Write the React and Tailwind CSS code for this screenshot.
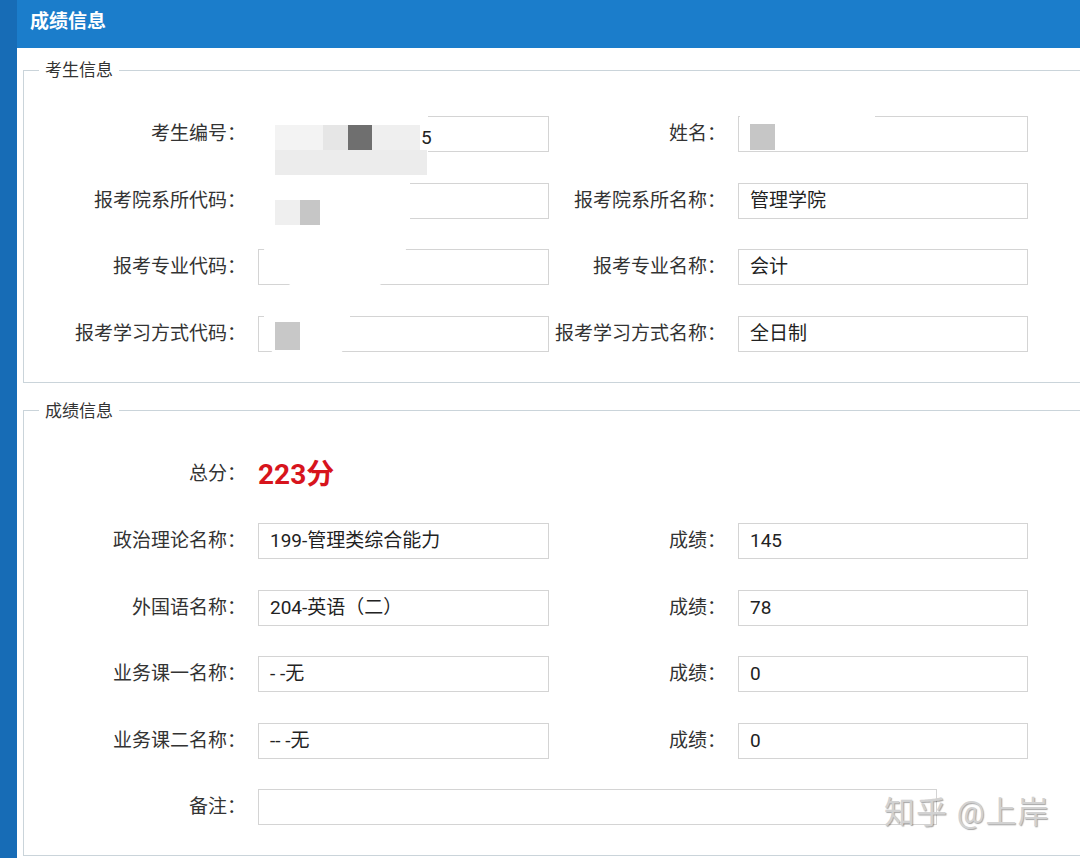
import React from 'react';

const FONT = "font-['Roboto','Noto_Sans_CJK_SC',sans-serif]";

function Field({ label, value, labelW = 'w-[222px]', inputW = 'w-[291px]' }) {
  return (
    <>
      <div className={`${labelW} shrink-0 pr-[-2px] text-right text-[19px] leading-[36px] text-[#333]`}>{label}</div>
      <div
        className={`${inputW} ml-[12px] h-[36px] shrink-0 border border-[#d4d4d4] bg-white pl-[11px] text-[19px] leading-[34px] text-[#222]`}
      >
        {value}
      </div>
    </>
  );
}

function Row({ left, right }) {
  return (
    <div className="flex h-[36px] items-center">
      <Field label={left[0]} value={left[1]} />
      {right && <Field label={right[0]} value={right[1]} labelW="w-[177px]" inputW="w-[290px]" />}
    </div>
  );
}

function Box({ title, className = '', children }) {
  return (
    <fieldset className={`ml-[6px] w-[1070px] border border-[#cad4da] px-0 pt-[34px] pb-[30px] ${className}`}>
      <legend className="ml-[15px] px-[6px] text-[17px] leading-[24px] text-[#333]">{title}</legend>
      <div className="flex flex-col gap-y-[30.5px]">{children}</div>
    </fieldset>
  );
}

export default function App() {
  return (
    <div className={`relative flex h-[858px] w-[1080px] overflow-hidden bg-[#1a72bd] ${FONT}`}>
      <div className="w-[17px] shrink-0 bg-[#176cb6]" />
      <div className="flex min-w-0 flex-1 flex-col">
        <div className="flex h-[48px] items-center bg-[#1b7dcb] pb-[3px] pl-[13px] text-[19px] font-bold text-white">
          成绩信息
        </div>
        <div className="flex-1 overflow-hidden bg-white pt-[10px]">
          <Box title="考生信息">
            <Row left={['考生编号：', '']} right={['姓名：', '']} />
            <Row left={['报考院系所代码：', '']} right={['报考院系所名称：', '管理学院']} />
            <Row left={['报考专业代码：', '']} right={['报考专业名称：', '会计']} />
            <Row left={['报考学习方式代码：', '']} right={['报考学习方式名称：', '全日制']} />
          </Box>
          <Box title="成绩信息" className="mt-[16px]">
            <div className="flex h-[36px] items-center">
              <div className="w-[222px] shrink-0 text-right text-[19px] text-[#333]">总分：</div>
              <div className="ml-[12px] pt-[1px] text-[28px] font-bold text-[#d7141c]">223分</div>
            </div>
            <Row left={['政治理论名称：', '199-管理类综合能力']} right={['成绩：', '145']} />
            <Row left={['外国语名称：', '204-英语（二）']} right={['成绩：', '78']} />
            <Row left={['业务课一名称：', '-  -无']} right={['成绩：', '0']} />
            <Row left={['业务课二名称：', '-- -无']} right={['成绩：', '0']} />
            <div className="flex h-[36px] items-center">
              <Field label="备注：" value="" inputW="w-[679px]" />
            </div>
          </Box>
        </div>
      </div>

      {/* mosaic laid over the personal data */}
      <div className="absolute left-[256px] top-[108px] flex h-[70px] w-[172px] flex-col bg-white pl-[19px] pt-[17px]">
        <div className="flex h-[25px]">
          <div className="w-[50px] bg-[#f3f3f3]" />
          <div className="w-[25px] bg-[#e6e6e6]" />
          <div className="w-[25px] bg-[#6f6f6f]" />
          <div className="w-[50px] bg-[#efefef]" />
          <div className="flex w-[8px] items-center pl-[1px] text-[19px] leading-[25px] text-[#222]">5</div>
        </div>
        <div className="h-[25px] w-[152px] bg-[#ececec]" />
      </div>

      <div className="absolute left-[256px] top-[178px] flex h-[54px] w-[154px] bg-white pl-[19px] pt-[22px]">
        <div className="h-[25px] w-[25px] bg-[#efefef]" />
        <div className="h-[25px] w-[20px] bg-[#c6c6c6]" />
      </div>
      <div className="absolute left-[262px] top-[232px] h-[62px] w-[146px] rounded-b-[60px] bg-white" />

      <div className="absolute left-[264px] top-[312px] flex h-[56px] w-[86px] rounded-b-[40px] bg-white pl-[11px] pt-[10px]">
        <div className="h-[28px] w-[25px] bg-[#c8c8c8]" />
      </div>

      <div className="absolute left-[740px] top-[114px] flex h-[37px] w-[135px] flex-col">
        <div className="h-[4px] bg-white" />
        <div className="ml-[10px] mt-[6px] h-[26px] w-[25px] bg-[#c6c6c6]" />
      </div>

      <div className="absolute left-[884px] top-[791px] text-[31px] leading-[44px] tracking-[1px] text-[#d2d2d2] [text-shadow:1px_1px_1px_rgba(0,0,0,0.35)]">
        知乎 @上岸
      </div>
    </div>
  );
}
